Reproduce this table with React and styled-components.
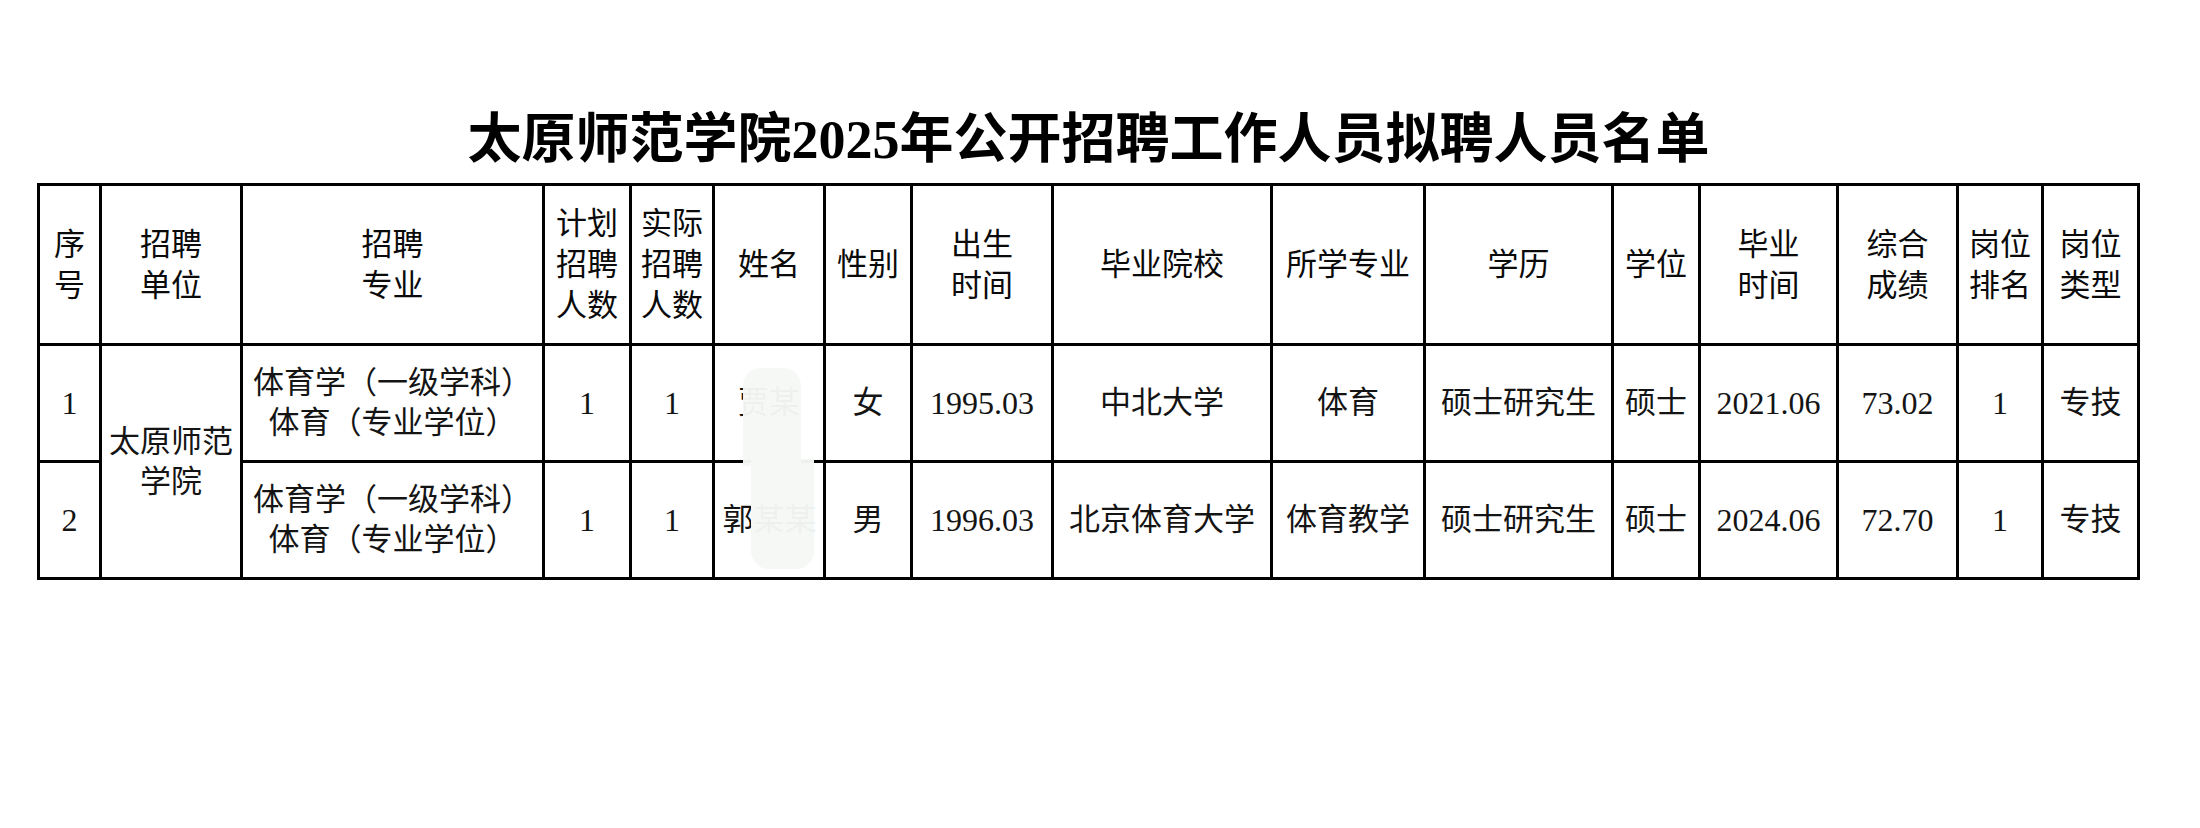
import React from 'react';
import styled, { createGlobalStyle } from 'styled-components';

const GlobalStyle = createGlobalStyle`
  html, body {
    margin: 0;
    padding: 0;
    background: #ffffff;
  }
  body {
    font-family: "Liberation Serif", "Noto Sans CJK SC", serif;
    color: #000;
  }
`;

const Page = styled.div`
  width: 2200px;
  height: 828px;
  box-sizing: border-box;
  padding: 109px 0 0 37px;
  background: #ffffff;
`;

const Title = styled.h1`
  width: 2103px;
  margin: 0 0 12px;
  height: 62px;
  line-height: 62px;
  text-align: center;
  font-family: "Liberation Serif", "Noto Sans CJK SC", serif;
  font-size: 54px;
  font-weight: 700;
  color: #000;
  white-space: nowrap;
`;

const Table = styled.table`
  width: 2103px;
  table-layout: fixed;
  border-collapse: collapse;
  border: 3px solid #000;
`;

const HeadCell = styled.th`
  height: 157px;
  padding: 0;
  border: 3px solid #000;
  text-align: center;
  vertical-align: middle;
  font-family: "Liberation Serif", "Noto Sans CJK SC", serif;
  font-size: 31px;
  font-weight: 400;
  line-height: 41px;
  color: #0a0a0a;
  white-space: nowrap;
`;

const Cell = styled.td`
  position: relative;
  height: 114px;
  padding: 0;
  border: 3px solid #000;
  text-align: center;
  vertical-align: middle;
  font-family: "Liberation Serif", "Noto Sans CJK SC", serif;
  font-size: ${(p) => (p.$num ? '32px' : '31px')};
  line-height: 40px;
  color: #141414;
  white-space: nowrap;
`;

// privacy smudge lying over the name column
const Mask = styled.span`
  position: absolute;
  left: ${(p) => p.$left}px;
  top: ${(p) => p.$top}px;
  width: ${(p) => p.$width}px;
  height: ${(p) => p.$height}px;
  background: rgba(246, 248, 246, 0.97);
  border-radius: ${(p) => p.$radius};
`;

const columns = [62, 141, 302, 87, 83, 111, 87, 141, 219, 153, 188, 87, 138, 120, 85, 96];

const headers = [
  ['序', '号'],
  ['招聘', '单位'],
  ['招聘', '专业'],
  ['计划', '招聘', '人数'],
  ['实际', '招聘', '人数'],
  ['姓名'],
  ['性别'],
  ['出生', '时间'],
  ['毕业院校'],
  ['所学专业'],
  ['学历'],
  ['学位'],
  ['毕业', '时间'],
  ['综合', '成绩'],
  ['岗位', '排名'],
  ['岗位', '类型'],
];

const rows = [
  {
    no: '1',
    planned: '1',
    actual: '1',
    name: '贾某',
    gender: '女',
    birth: '1995.03',
    school: '中北大学',
    major: '体育',
    edu: '硕士研究生',
    degree: '硕士',
    grad: '2021.06',
    score: '73.02',
    rank: '1',
    type: '专技',
  },
  {
    no: '2',
    planned: '1',
    actual: '1',
    name: '郭某某',
    gender: '男',
    birth: '1996.03',
    school: '北京体育大学',
    major: '体育教学',
    edu: '硕士研究生',
    degree: '硕士',
    grad: '2024.06',
    score: '72.70',
    rank: '1',
    type: '专技',
  },
];

const Lines = ({ lines }) =>
  lines.map((l, i) => (
    <React.Fragment key={i}>
      {i > 0 && <br />}
      {l}
    </React.Fragment>
  ));

const App = () => {
  return (
    <>
      <GlobalStyle />
      <Page>
        <Title>太原师范学院2025年公开招聘工作人员拟聘人员名单</Title>
        <Table>
          <colgroup>
            {columns.map((w, i) => (
              <col key={i} style={{ width: w }} />
            ))}
          </colgroup>
          <thead>
            <tr>
              {headers.map((h, i) => (
                <HeadCell key={i}>
                  <Lines lines={h} />
                </HeadCell>
              ))}
            </tr>
          </thead>
          <tbody>
            {rows.map((r, i) => (
              <tr key={r.no}>
                <Cell $num>{r.no}</Cell>
                {i === 0 && (
                  <Cell rowSpan={2}>
                    太原师范
                    <br />
                    学院
                  </Cell>
                )}
                <Cell>
                  体育学（一级学科）
                  <br />
                  体育（专业学位）
                </Cell>
                <Cell $num>{r.planned}</Cell>
                <Cell $num>{r.actual}</Cell>
                <Cell>
                  {r.name}
                  {i === 0 ? (
                    <Mask $left={28} $top={22} $width={58} $height={98} $radius="18px 18px 0 0" />
                  ) : (
                    <Mask $left={36} $top={-4} $width={63} $height={110} $radius="0 0 18px 18px" />
                  )}
                </Cell>
                <Cell>{r.gender}</Cell>
                <Cell $num>{r.birth}</Cell>
                <Cell>{r.school}</Cell>
                <Cell>{r.major}</Cell>
                <Cell>{r.edu}</Cell>
                <Cell>{r.degree}</Cell>
                <Cell $num>{r.grad}</Cell>
                <Cell $num>{r.score}</Cell>
                <Cell $num>{r.rank}</Cell>
                <Cell>{r.type}</Cell>
              </tr>
            ))}
          </tbody>
        </Table>
      </Page>
    </>
  );
};

export default App;
